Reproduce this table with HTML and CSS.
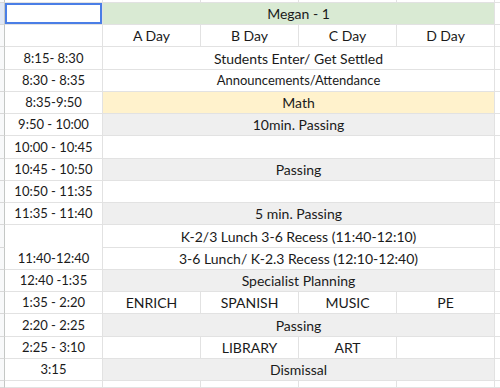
FILE: index.html
```html
<!DOCTYPE html>
<html>
<head>
<meta charset="utf-8">
<link rel="stylesheet" href="styles.css">
</head>
<body>
<div class="sheet">
  <!-- partial top row -->
  <div class="rh"></div><div class="c t"></div><div class="c b"></div><div class="c cc"></div><div class="c d"></div><div class="c e"></div><div class="c f"></div>

  <div class="rh sel-rh"></div><div class="c t selected"></div><div class="c m green">Megan - 1</div><div class="c f"></div>
  <div class="rh"></div><div class="c t"></div><div class="c b">A Day</div><div class="c cc">B Day</div><div class="c d">C Day</div><div class="c e">D Day</div><div class="c f"></div>
  <div class="rh"></div><div class="c t">8:15- 8:30</div><div class="c m">Students Enter/ Get Settled</div><div class="c f"></div>
  <div class="rh"></div><div class="c t">8:30 - 8:35</div><div class="c m small">Announcements/Attendance</div><div class="c f"></div>
  <div class="rh"></div><div class="c t">8:35-9:50</div><div class="c m yellow">Math</div><div class="c f"></div>
  <div class="rh"></div><div class="c t">9:50 - 10:00</div><div class="c m gray">10min. Passing</div><div class="c f"></div>
  <div class="rh"></div><div class="c t">10:00 - 10:45</div><div class="c m"></div><div class="c f"></div>
  <div class="rh"></div><div class="c t">10:45 - 10:50</div><div class="c m gray">Passing</div><div class="c f"></div>
  <div class="rh"></div><div class="c t">10:50 - 11:35</div><div class="c m"></div><div class="c f"></div>
  <div class="rh"></div><div class="c t">11:35 - 11:40</div><div class="c m gray">5 min. Passing</div><div class="c f"></div>
  <div class="rh"></div><div class="c t span2">11:40-12:40</div><div class="c m">K-2/3 Lunch 3-6 Recess (11:40-12:10)</div><div class="c f"></div>
  <div class="rh"></div><div class="c m">3-6 Lunch/ K-2.3 Recess (12:10-12:40)</div><div class="c f"></div>
  <div class="rh"></div><div class="c t">12:40 -1:35</div><div class="c m gray">Specialist Planning</div><div class="c f"></div>
  <div class="rh"></div><div class="c t">1:35 - 2:20</div><div class="c b">ENRICH</div><div class="c cc">SPANISH</div><div class="c d">MUSIC</div><div class="c e">PE</div><div class="c f"></div>
  <div class="rh"></div><div class="c t">2:20 - 2:25</div><div class="c m gray">Passing</div><div class="c f"></div>
  <div class="rh"></div><div class="c t">2:25 - 3:10</div><div class="c b"></div><div class="c cc">LIBRARY</div><div class="c d">ART</div><div class="c e"></div><div class="c f"></div>
  <div class="rh"></div><div class="c t">3:15</div><div class="c m gray">Dismissal</div><div class="c f"></div>

  <!-- partial bottom row -->
  <div class="rh"></div><div class="c t"></div><div class="c b"></div><div class="c cc"></div><div class="c d"></div><div class="c e"></div><div class="c f"></div>
</div>
</body>
</html>
```

FILE: styles.css
```css
html, body {
  margin: 0;
  padding: 0;
  background: #ffffff;
}

.sheet {
  display: grid;
  grid-template-columns: 5px 98px 98px 98px 98px 98px 1fr;
  grid-template-rows: 3px repeat(17, 22.24px) 1fr;
  width: 500px;
  height: 388px;
  overflow: hidden;
  font-family: Lato, "Liberation Sans", sans-serif;
  font-size: 14px;
  color: #1a1a1a;
}

.rh {
  grid-column: 1;
  box-sizing: border-box;
  background: #f8f9fa;
  border-right: 1px solid #c4c7c5;
  border-bottom: 1px solid #d9d9d9;
}

.sel-rh {
  background: #dfe7f6;
}

.c {
  box-sizing: border-box;
  border-right: 1px solid #e2e2e2;
  border-bottom: 1px solid #e2e2e2;
  display: flex;
  align-items: flex-end;
  justify-content: center;
  padding-bottom: 2px;
  white-space: nowrap;
  overflow: hidden;
  line-height: 17px;
  background: #ffffff;
}

.t { grid-column: 2; font-size: 13px; }
.b { grid-column: 3; }
.cc { grid-column: 4; }
.d { grid-column: 5; }
.e { grid-column: 6; }
.m { grid-column: 3 / 7; }
.f { grid-column: 7; border-right: none; }

.span2 { grid-row: span 2; }

.small { font-size: 13px; }

.selected {
  box-shadow: inset 0 0 0 2px #4a7ee6;
}

.green { background: #d9ead3; }
.yellow { background: #fff2cc; }
.gray { background: #efefef; }
```
